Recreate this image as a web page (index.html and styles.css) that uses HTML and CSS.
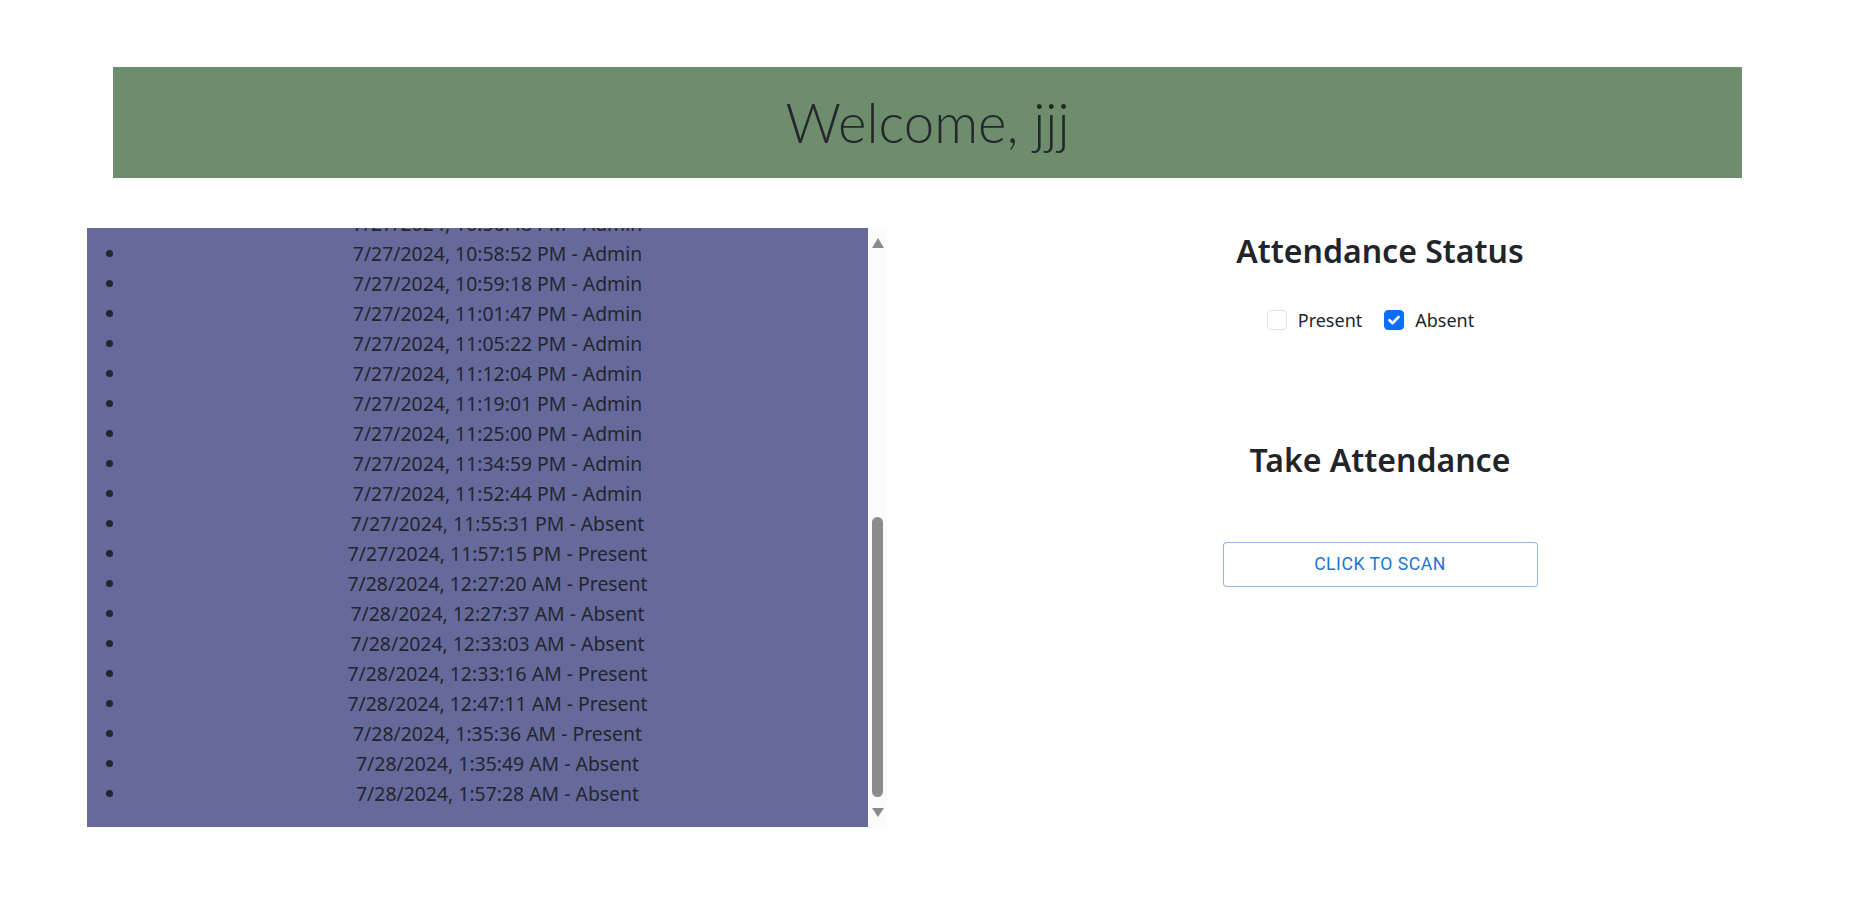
FILE: index.html
```html
<!DOCTYPE html>
<html lang="en">
<head>
<meta charset="utf-8">
<title>Attendance</title>
<link rel="stylesheet" href="styles.css">
</head>
<body>
<header class="banner">
  <h1 class="banner-title">Welcome, jjj</h1>
</header>
<main class="content">
  <section class="history">
    <div class="history-viewport">
      <ul class="history-list">
        <li>7/27/2024, 10:56:48 PM - Admin</li>
        <li>7/27/2024, 10:58:52 PM - Admin</li>
        <li>7/27/2024, 10:59:18 PM - Admin</li>
        <li>7/27/2024, 11:01:47 PM - Admin</li>
        <li>7/27/2024, 11:05:22 PM - Admin</li>
        <li>7/27/2024, 11:12:04 PM - Admin</li>
        <li>7/27/2024, 11:19:01 PM - Admin</li>
        <li>7/27/2024, 11:25:00 PM - Admin</li>
        <li>7/27/2024, 11:34:59 PM - Admin</li>
        <li>7/27/2024, 11:52:44 PM - Admin</li>
        <li>7/27/2024, 11:55:31 PM - Absent</li>
        <li>7/27/2024, 11:57:15 PM - Present</li>
        <li>7/28/2024, 12:27:20 AM - Present</li>
        <li>7/28/2024, 12:27:37 AM - Absent</li>
        <li>7/28/2024, 12:33:03 AM - Absent</li>
        <li>7/28/2024, 12:33:16 AM - Present</li>
        <li>7/28/2024, 12:47:11 AM - Present</li>
        <li>7/28/2024, 1:35:36 AM - Present</li>
        <li>7/28/2024, 1:35:49 AM - Absent</li>
        <li>7/28/2024, 1:57:28 AM - Absent</li>
      </ul>
    </div>
    <div class="scrollbar" aria-hidden="true">
      <div class="scroll-btn">
        <svg width="12" height="10" viewBox="0 0 12 10"><path d="M6 0 L12 10 L0 10 Z" fill="#8a8a8a"/></svg>
      </div>
      <div class="scroll-track"><div class="scroll-thumb"></div></div>
      <div class="scroll-btn">
        <svg width="12" height="9" viewBox="0 0 12 9"><path d="M0 0 L12 0 L6 9 Z" fill="#8a8a8a"/></svg>
      </div>
    </div>
  </section>

  <section class="panel">
    <h2 class="panel-title">Attendance Status</h2>
    <div class="status-options">
      <label class="check">
        <span class="check-box"></span>
        <span class="check-label">Present</span>
      </label>
      <label class="check">
        <span class="check-box is-checked">
          <svg width="12" height="10" viewBox="0 0 12 10"><path d="M1.5 5.2 L4.6 8.2 L10.5 2" fill="none" stroke="#fff" stroke-width="2.6" stroke-linecap="round" stroke-linejoin="round"/></svg>
        </span>
        <span class="check-label">Absent</span>
      </label>
    </div>
    <h2 class="panel-title panel-title-second">Take Attendance</h2>
    <button class="scan-btn" type="button">Click to scan</button>
  </section>
</main>
</body>
</html>
```

FILE: styles.css
```css
html, body {
  margin: 0;
  padding: 0;
  background: #fff;
}

body {
  font-family: "Noto Sans", "Open Sans", sans-serif;
  color: #212529;
}

.banner {
  margin: 67px 0 0 113px;
  width: 1629px;
  height: 111px;
  background: #6d8d6d;
  display: flex;
  align-items: center;
  justify-content: center;
}

.banner-title {
  margin: 0;
  font-family: "Lato", sans-serif;
  font-weight: 300;
  font-size: 54.5px;
  color: #25272c;
  line-height: 1;
}

.content {
  display: flex;
  margin-top: 50px;
}

.history {
  display: flex;
  margin-left: 87px;
  height: 599px;
}

.history-viewport {
  width: 781px;
  background: #666a9a;
  overflow: hidden;
  display: flex;
  flex-direction: column;
  justify-content: flex-end;
}

.history-list {
  margin: 0;
  padding: 0 0 18px 40px;
  text-align: center;
  font-size: 19.4px;
  line-height: 30px;
  color: #24252f;
}

.history-list li {
  white-space: nowrap;
}

.scrollbar {
  width: 19px;
  background: #fbfbfb;
  display: flex;
  flex-direction: column;
}

.scroll-btn {
  height: 30px;
  display: flex;
  align-items: center;
  justify-content: center;
}

.scroll-track {
  flex: 1;
  display: flex;
  flex-direction: column;
  justify-content: flex-end;
  align-items: center;
}

.scroll-thumb {
  width: 11px;
  height: 280px;
  border-radius: 6px;
  background: #8c8c8c;
}

.panel {
  flex: 1;
  margin-left: 23px;
  display: flex;
  flex-direction: column;
  align-items: center;
}

.panel-title {
  margin: 0;
  font-family: "Noto Sans", sans-serif;
  font-weight: 600;
  font-size: 32px;
  line-height: 1.2;
  color: #212529;
}

.panel-title:first-child {
  margin-top: 4px;
}

.status-options {
  display: flex;
  gap: 22px;
  margin-top: 38px;
  padding-right: 19px;
}

.check {
  display: flex;
  align-items: center;
  gap: 11px;
  font-size: 18px;
}

.check-box {
  width: 18px;
  height: 18px;
  border: 1px solid #dee2e6;
  border-radius: 4px;
  background: #fff;
  display: flex;
  align-items: center;
  justify-content: center;
}

.check-box.is-checked {
  background: #0d6efd;
  border-color: #0d6efd;
}

.panel-title-second {
  margin-top: 109px;
}

.scan-btn {
  margin-top: 62px;
  width: 315px;
  height: 45px;
  border: 1px solid rgba(25, 118, 210, 0.5);
  border-radius: 4px;
  background: #fff;
  color: #1976d2;
  font-family: "Roboto", sans-serif;
  font-weight: 400;
  font-size: 17.6px;
  letter-spacing: 0.03em;
  text-transform: uppercase;
}
```
